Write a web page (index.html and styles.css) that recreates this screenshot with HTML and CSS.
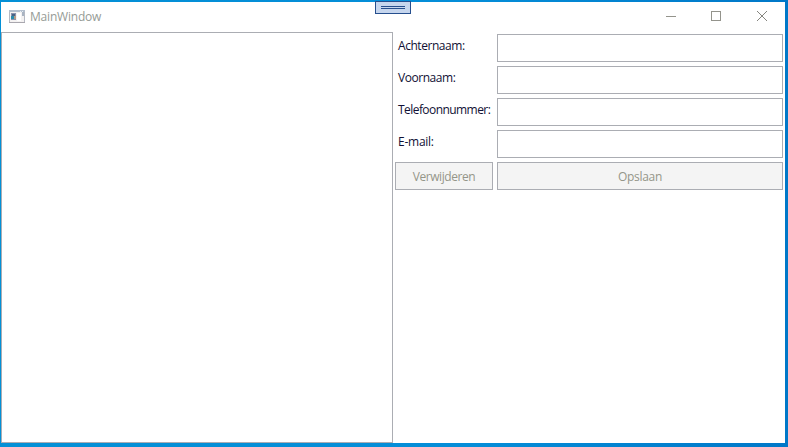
FILE: index.html
```html
<!DOCTYPE html>
<html lang="nl">
<head>
<meta charset="utf-8">
<title>MainWindow</title>
<link rel="stylesheet" href="styles.css">
</head>
<body>
<main class="window">
  <header class="titlebar">
    <svg class="app-icon" width="16" height="14" viewBox="0 0 16 14" shape-rendering="crispEdges">
      <path d="M0 0h16v13H0z" fill="#b5b9c3"/>
      <path d="M1 2h14v10H1z" fill="#f4f2f2"/>
      <path d="M0 0h16v2H0z" fill="#b3bfce"/>
      <path d="M11 1h1v1h-1zM13 1h1v1h-1z" fill="#e8edf3"/>
      <path d="M2 3h5v7H2z" fill="#8992ae"/>
      <path d="M3 4h3v2H3z" fill="#4c6384"/>
      <path d="M2 6h3v3H2z" fill="#288cad"/>
      <path d="M5 6h2v3H5z" fill="#b59b88"/>
      <path d="M8 3h4v8H8z" fill="#fff"/>
      <path d="M13 2h2v4h-2z" fill="#a9b4c2"/>
      <path d="M0 12h16v1H0z" fill="#a9a7ae"/>
    </svg>
    <h1 class="title">MainWindow</h1>
    <div class="controls">
      <svg width="46" height="28" shape-rendering="crispEdges"><path d="M18 14.5h10" stroke="#94948c"/></svg>
      <svg width="45" height="28" shape-rendering="crispEdges"><rect x="17.5" y="9.5" width="9" height="9" fill="none" stroke="#94948c"/></svg>
      <svg width="46" height="28"><path d="M18 9l10 10M28 9L18 19" stroke="#85857f" fill="none"/></svg>
    </div>
  </header>
  <div class="debug-tab"></div>
  <div class="content">
    <div class="list"></div>
    <form class="form">
      <label class="label" for="a">Achternaam:</label><input class="field" id="a">
      <label class="label" for="v">Voornaam:</label><input class="field" id="v">
      <label class="label label-tight" for="t">Telefoonnummer:</label><input class="field" id="t">
      <label class="label label-wide" for="e">E-mail:</label><input class="field" id="e">
      <button class="button" type="button" disabled>Verwijderen</button>
      <button class="button button-save" type="button" disabled>Opslaan</button>
    </form>
  </div>
</main>
</body>
</html>
```
FILE: styles.css
```css
* { box-sizing: border-box; }
body {
  margin: 0;
  width: 788px;
  height: 447px;
  padding: 2px 3px 4px 1px;
  overflow: hidden;
  background: linear-gradient(90deg, #0390d6 0%, #048dd8 60%, #0078c8 99.5%);
  font: 12px/16px "Open Sans", "Noto Sans", sans-serif;
  color: #101034;
}
.window {
  position: relative;
  display: flex;
  flex-direction: column;
  height: 441px;
  background: #fff;
}
.titlebar {
  display: flex;
  align-items: center;
  height: 30px;
  padding-left: 8px;
}
.app-icon { margin-top: -1px; }
.title {
  flex: 1;
  margin: 0 0 0 5px;
  font: inherit;
  letter-spacing: -0.2px;
  color: #969b96;
}
.controls { display: flex; height: 28px; align-self: flex-start; }
.controls svg { display: block; }
.debug-tab {
  position: absolute;
  left: 374px;
  top: -1px;
  width: 36px;
  height: 13px;
  border: 1px solid #264f8e;
  background: linear-gradient(#264f8e, #264f8e) 5px 4px / 24px 1px no-repeat,
    linear-gradient(#264f8e, #264f8e) 5px 6px / 24px 1px no-repeat, #c6d6ee;
}
.content { display: flex; flex: 1; }
.list { width: 392px; border: 1px solid #abadb3; }
.form {
  display: grid;
  flex: 1;
  grid-template-columns: 98px 1fr;
  grid-auto-rows: 28px;
  align-content: start;
  gap: 4px;
  padding: 2px;
}
.label {
  padding: 4px 0 0 3px;
  white-space: nowrap;
  letter-spacing: -0.45px;
}
.label-tight { letter-spacing: -0.56px; }
.label-wide { letter-spacing: -0.25px; }
.field, .button {
  width: 100%;
  height: 28px;
  margin: 0;
  border: 1px solid #abadb3;
  border-radius: 0;
  background: #fff;
  font: inherit;
}
.button {
  padding: 2px 0 0;
  background: #f4f4f4;
  color: #949689;
  letter-spacing: -0.42px;
}
.button-save { letter-spacing: -0.3px; }
```
